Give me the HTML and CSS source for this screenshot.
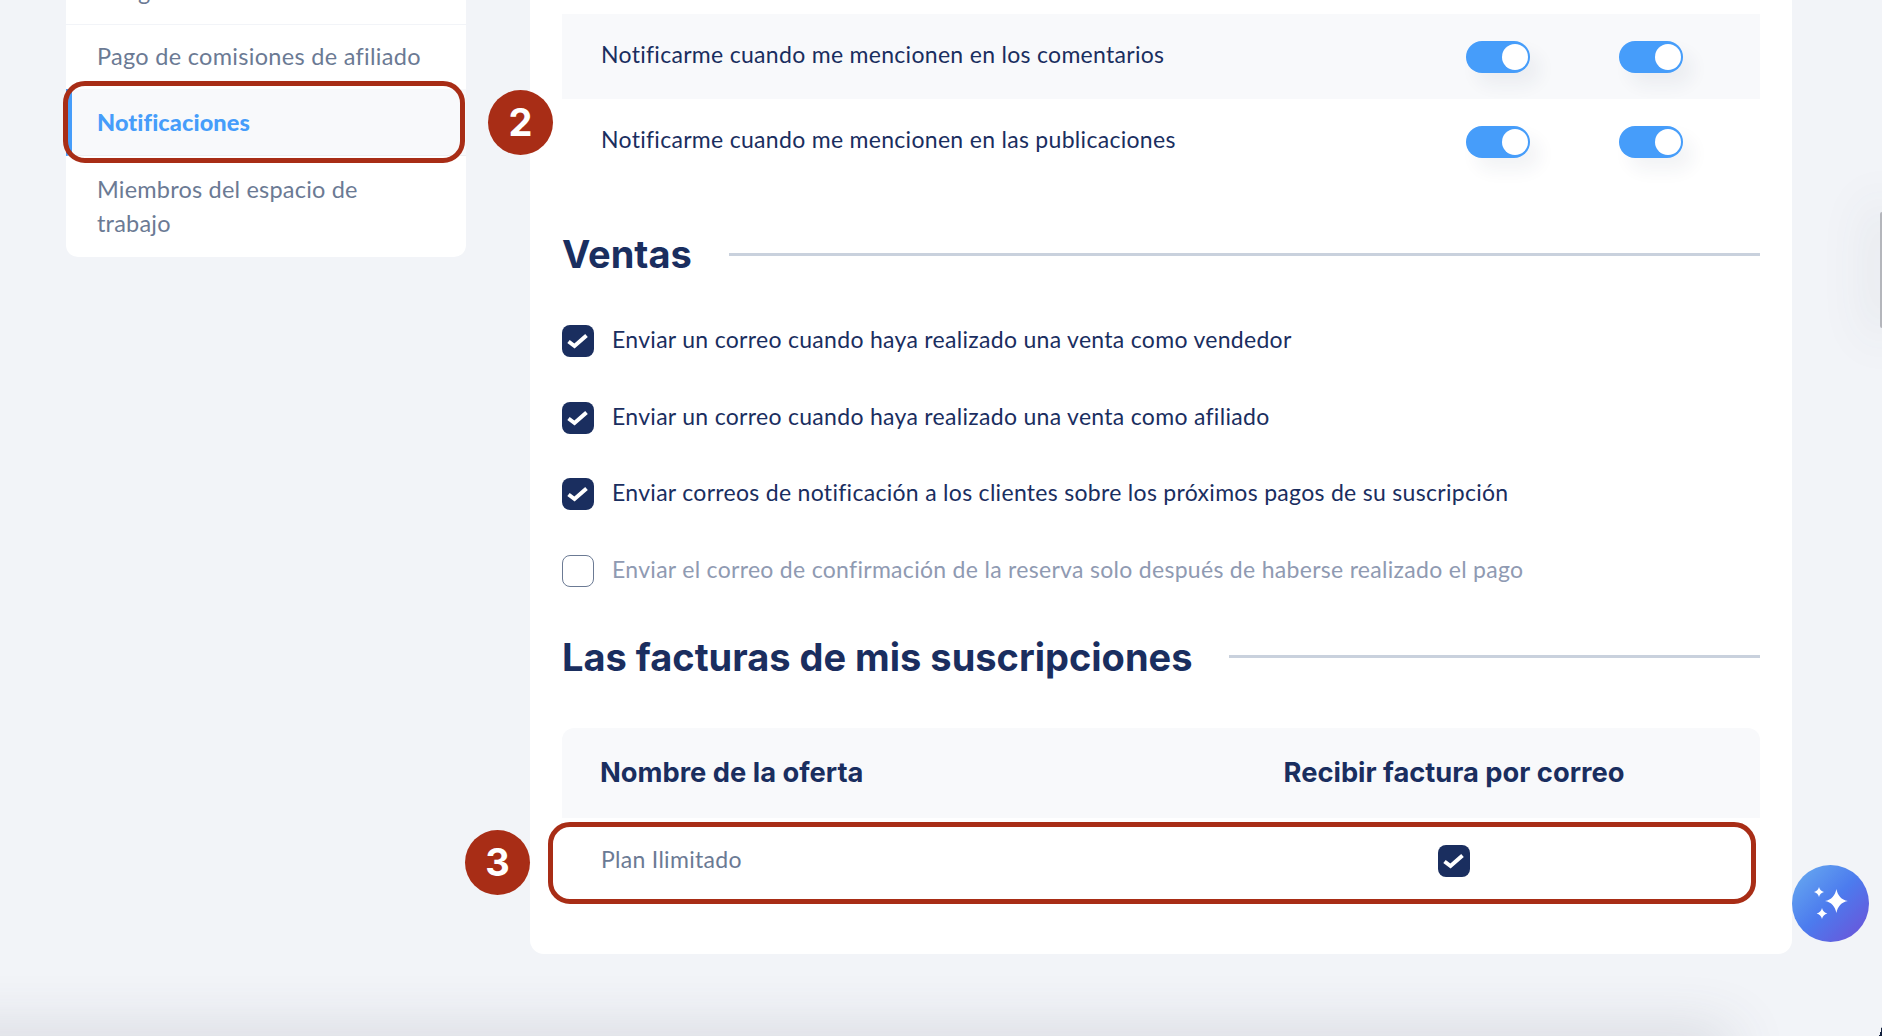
FILE: index.html
```html
<!DOCTYPE html>
<html lang="es">

<head>
    <meta charset="UTF-8">
    <title>Notificaciones</title>
    <link rel="stylesheet" href="styles.css">
</head>

<body>
    <div class="page">
        <aside class="sidebar">
            <div class="sideItem sideClipped">Integraciones</div>
            <div class="sideItem sidePago">Pago de comisiones de afiliado</div>
            <div class="sideItem sideActive">Notificaciones
                <span class="redBox redBoxSide"></span>
                <span class="stepBadge stepTwo">2</span>
            </div>
            <div class="sideItem sideLast">Miembros del espacio de trabajo</div>
        </aside>

        <main class="content">
            <div class="notifyRow notifyShaded">
                <span class="notifyText">Notificarme cuando me mencionen en los comentarios</span>
                <span class="toggle"></span>
                <span class="toggle"></span>
            </div>
            <div class="notifyRow">
                <span class="notifyText">Notificarme cuando me mencionen en las publicaciones</span>
                <span class="toggle"></span>
                <span class="toggle"></span>
            </div>

            <h2 class="sectionTitle sectionVentas">Ventas</h2>

            <ul class="checkList">
                <li><span class="check"><svg viewBox="0 0 32 32"><path d="M6.500 16.500l6 4.500 12-10.500"/></svg></span><span class="rowLabel">Enviar un correo cuando haya realizado una venta como vendedor</span></li>
                <li><span class="check"><svg viewBox="0 0 32 32"><path d="M6.500 16.500l6 4.500 12-10.500"/></svg></span><span class="rowLabel">Enviar un correo cuando haya realizado una venta como afiliado</span></li>
                <li><span class="check"><svg viewBox="0 0 32 32"><path d="M6.500 16.500l6 4.500 12-10.500"/></svg></span><span class="rowLabel">Enviar correos de notificación a los clientes sobre los próximos pagos de su suscripción</span></li>
                <li class="disabled"><span class="check checkOff"></span><span class="rowLabel">Enviar el correo de confirmación de la reserva solo después de haberse realizado el pago</span></li>
            </ul>

            <h2 class="sectionTitle sectionFacturas">Las facturas de mis suscripciones</h2>

            <div class="offerTable">
                <div class="offerHead">
                    <span>Nombre de la oferta</span>
                    <span class="offerCol">Recibir factura por correo</span>
                </div>
                <div class="offerRow">
                    <span class="rowLabel">Plan Ilimitado</span>
                    <span class="offerCol"><span class="check"><svg viewBox="0 0 32 32"><path d="M6.500 16.500l6 4.500 12-10.500"/></svg></span></span>
                    <span class="redBox redBoxRow"></span>
                    <span class="stepBadge stepThree">3</span>
                </div>
            </div>
        </main>
    </div>

    <button class="aiButton" aria-label="Asistente">
        <svg viewBox="0 0 77 77">
            <path d="M44.400 24c1.200 6.500 5 10.800 11.400 12-6.400 1.200-10.200 5.500-11.400 12-1.200-6.500-5-10.800-11.400-12 6.400-1.200 10.200-5.500 11.400-12z"/>
            <path d="M27 22c.6 2.600 2.400 4.400 5 5-2.600.6-4.400 2.400-5 5-.6-2.600-2.400-4.400-5-5 2.600-.6 4.400-2.400 5-5z"/>
            <path d="M30 43c.6 2.700 2.600 4.700 5.300 5.500-2.700.8-4.700 2.800-5.300 5.500-.6-2.700-2.600-4.700-5.300-5.500 2.700-.8 4.700-2.800 5.300-5.500z"/>
        </svg>
    </button>
    <div class="bottomFade"></div>
    <div class="edgeHandle"></div>
    <div class="windowCorner"></div>
</body>

</html>
```

FILE: styles.css
```css
html,
body {
    margin: 0;
    height: 100%;
    overflow: hidden;
}

body {
    background-color: #f2f4f8;
    font-family: "Lato", sans-serif;
    color: #1a2e5f;
    position: relative;
}

.page {
    display: flex;
    align-items: flex-start;
    gap: 64px;
    padding-left: 66px;
    width: 1792px;
    box-sizing: border-box;
}

/* sidebar */
.sidebar {
    width: 400px;
    margin-top: -36px;
    background-color: #ffffff;
    border-radius: 12px;
    font-size: 23.500px;
    letter-spacing: 0.200px;
    line-height: 34px;
    color: #6b7a94;
}

.sideItem {
    position: relative;
    padding: 15px 40px 15px 31px;
    border-top: 1px solid #f2f4f8;
}

.sideClipped {
    padding: 10px 31px 16px;
    border-top: none;
}

.sidePago {
    padding: 14px 40px 16px 31px;
    letter-spacing: 0.300px;
}

.sideActive {
    background-color: #f8f9fb;
    border-left: 6px solid #469dfa;
    border-bottom: 1px solid #eef0f4;
    border-top: none;
    padding: 16px 40px 16px 25px;
    color: #469dfa;
    font-weight: 900;
    letter-spacing: 0.100px;
}

.sideLast {
    padding: 16px 40px 17px 31px;
    border-top: none;
}

/* main card */
.content {
    flex: 1;
    background-color: #ffffff;
    border-radius: 0 0 14px 14px;
    padding: 14px 32px 51px;
    font-size: 23px;
    letter-spacing: 0.300px;
}

.notifyRow {
    display: flex;
    align-items: center;
    height: 85px;
    padding: 0 77px 0 39px;
}

.notifyShaded {
    background-color: #f8f9fb;
}

.notifyText {
    flex: 1;
    padding-bottom: 6px;
}

.toggle {
    position: relative;
    width: 64px;
    height: 32px;
    margin-left: 89px;
    background-color: #469dfa;
    border-radius: 16px;
    box-shadow: 10px 12px 18px rgba(30, 50, 90, 0.06);
}

.toggle::after {
    content: "";
    position: absolute;
    top: 3px;
    right: 2.500px;
    width: 26px;
    height: 26px;
    background-color: #ffffff;
    border-radius: 50%;
}

.sectionTitle {
    display: flex;
    align-items: center;
    gap: 37px;
    margin: 0;
    font-family: "Inter", sans-serif;
    font-size: 38px;
    font-weight: 700;
    letter-spacing: 0;
    line-height: 46px;
    white-space: nowrap;
}

.sectionTitle::after {
    content: "";
    flex: 1;
    height: 3px;
    background-color: #c9d1dd;
}

.sectionVentas {
    margin-top: 47px;
}

.sectionFacturas {
    margin-top: 47px;
}

.checkList {
    list-style: none;
    margin: 48px 0 0;
    padding: 0;
}

.checkList li {
    display: flex;
    align-items: center;
    gap: 18px;
    height: 32px;
    margin-bottom: 44.500px;
}

.checkList li:last-child {
    margin-bottom: 0;
}

.rowLabel {
    padding-bottom: 4px;
}

.check {
    display: inline-block;
    flex: none;
    width: 32px;
    height: 32px;
    background-color: #1a2e5f;
    border-radius: 8px;
    box-sizing: border-box;
}

.check svg {
    display: block;
    width: 32px;
    height: 32px;
}

.check path {
    fill: none;
    stroke: #ffffff;
    stroke-width: 4;
}

.checkOff {
    background-color: #ffffff;
    border: 1px solid #6b7a94;
}

.disabled {
    color: #8f9ab2;
}

/* table */
.offerTable {
    margin-top: 48px;
}

.offerHead,
.offerRow {
    position: relative;
    display: grid;
    grid-template-columns: 1fr 340px;
    align-items: center;
    padding-right: 136px;
}

.offerHead {
    height: 90px;
    padding-left: 38px;
    background-color: #f8f9fb;
    border-radius: 12px 12px 0 0;
    font-family: "Inter", sans-serif;
    font-size: 27.300px;
    font-weight: 700;
    letter-spacing: 0;
    white-space: nowrap;
}

.offerRow {
    box-sizing: border-box;
    height: 85px;
    padding-top: 1px;
    padding-left: 39px;
    color: #6b7a94;
}

.offerCol {
    display: flex;
    justify-content: center;
}

/* annotations */
.redBox {
    position: absolute;
    box-sizing: border-box;
    border: 5px solid #a82d16;
    border-radius: 22px;
}

.redBoxSide {
    top: -8px;
    left: -9px;
    width: 402px;
    height: 82px;
}

.redBoxRow {
    top: 4px;
    left: -14px;
    width: 1208px;
    height: 82px;
}

.stepBadge {
    position: absolute;
    width: 65px;
    height: 65px;
    background-color: #a82d16;
    border-radius: 50%;
    color: #ffffff;
    font-family: "Inter", sans-serif;
    font-size: 38px;
    font-weight: 700;
    letter-spacing: 0;
    line-height: 65px;
    text-align: center;
}

.stepTwo {
    top: 1px;
    left: 416px;
}

.stepThree {
    top: 12px;
    left: -97px;
}

/* floating things */
.aiButton {
    position: absolute;
    left: 1792px;
    top: 865px;
    width: 77px;
    height: 77px;
    padding: 0;
    border: none;
    border-radius: 50%;
    background-image: linear-gradient(135deg, #6aaef0 0%, #4c7bee 50%, #6f4fd6 100%);
}

.aiButton svg {
    display: block;
    width: 77px;
    height: 77px;
    fill: #ffffff;
}

.bottomFade {
    position: absolute;
    left: -200px;
    right: 152px;
    bottom: -30px;
    height: 30px;
    box-shadow: 0 0 60px rgba(70, 75, 90, 0.24);
    pointer-events: none;
}

.edgeHandle {
    position: absolute;
    right: 0;
    top: 212px;
    width: 2px;
    height: 116px;
    background-color: #b4b6bc;
    border-radius: 2px 0 0 2px;
    box-shadow: 0 0 50px 10px rgba(70, 75, 90, 0.1);
}

.windowCorner {
    position: absolute;
    right: 0;
    bottom: 0;
    width: 4px;
    height: 16px;
    background-image: radial-gradient(ellipse 4px 16px at 0 0, transparent 99%, #14213d 100%);
}
```
